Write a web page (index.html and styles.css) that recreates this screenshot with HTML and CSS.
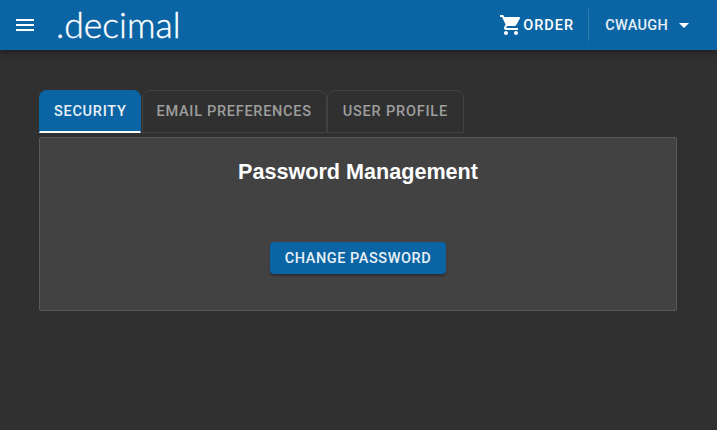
FILE: index.html
```html
<!DOCTYPE html>
<html lang="en">
<head>
  <meta charset="UTF-8">
  <title>Account settings</title>
  <link rel="stylesheet" href="styles.css">
</head>
<body>
  <header class="toolbar">
    <button class="menu-btn" aria-label="Menu">
      <svg width="24" height="24" viewBox="0 0 24 24"><path fill="#fff" d="M3 18h18v-2H3v2zm0-5h18v-2H3v2zm0-7v2h18V6H3z"/></svg>
    </button>
    <span class="logo">.decimal</span>
    <div class="spacer"></div>
    <a class="order">
      <svg width="24" height="24" viewBox="0 0 24 24"><path fill="#fff" d="M17.21 9l-4.38-6.56M7 18c-1.1 0-1.99.9-1.99 2S5.9 22 7 22s2-.9 2-2-.9-2-2-2zM1 2v2h2l3.6 7.59-1.35 2.45c-.16.28-.25.61-.25.96 0 1.1.9 2 2 2h12v-2H7.42c-.14 0-.25-.11-.25-.25l.03-.12.9-1.63h7.45c.75 0 1.41-.41 1.75-1.03l3.58-6.49c.08-.14.12-.31.12-.48 0-.55-.45-1-1-1H5.21l-.94-2H1zm16 16c-1.1 0-1.99.9-1.99 2s.89 2 1.99 2 2-.9 2-2-.9-2-2-2z"/></svg>
      <span>ORDER</span>
    </a>
    <div class="divider"></div>
    <a class="user">
      <span>CWAUGH</span>
      <i class="caret"></i>
    </a>
  </header>

  <main class="content">
    <ul class="tabs">
      <li class="tab active">SECURITY</li>
      <li class="tab">EMAIL PREFERENCES</li>
      <li class="tab">USER PROFILE</li>
    </ul>
    <section class="card">
      <h2>Password Management</h2>
      <button class="primary">CHANGE PASSWORD</button>
    </section>
  </main>
</body>
</html>
```

FILE: styles.css
```css
* {
  box-sizing: border-box;
  padding: 0;
  margin: 0;
}
html, body {
  height: 100%;
  overflow: hidden;
}
body {
  background: #303030;
  color: #fff;
  font-family: Roboto, "Liberation Sans", sans-serif;
}

.toolbar {
  display: flex;
  align-items: center;
  height: 50px;
  background: #0b65a4;
  box-shadow: 0 2px 4px -1px rgba(0,0,0,.2), 0 4px 5px 0 rgba(0,0,0,.14), 0 1px 10px 0 rgba(0,0,0,.12);
}
.menu-btn {
  display: flex;
  margin-left: 13px;
  background: none;
  border: none;
}
.logo {
  margin-left: 19px;
  font-family: Lato, sans-serif;
  font-size: 35.5px;
  font-weight: 300;
  line-height: 50px;
  color: #fff;
  -webkit-text-stroke: .4px #fff;
}
.spacer {
  flex: 1;
}
.order {
  display: flex;
  align-items: center;
  font-size: 14.5px;
  font-weight: 500;
  letter-spacing: 1px;
}
.divider {
  width: 1px;
  height: 32px;
  margin: 0 16px 0 14px;
  background: rgba(255,255,255,.15);
}
.user {
  display: flex;
  align-items: center;
  margin-right: 28px;
  font-size: 14.5px;
  font-weight: 500;
  letter-spacing: .3px;
  color: #e6eff6;
}
.caret {
  width: 0;
  height: 0;
  margin-left: 11px;
  border-left: 5px solid transparent;
  border-right: 5px solid transparent;
  border-top: 5px solid #fff;
}

.content {
  padding: 40px 40px 0 39px;
}
.tabs {
  display: flex;
  list-style: none;
}
.tab {
  height: 43px;
  padding: 0 14px;
  line-height: 41px;
  font-size: 14.5px;
  font-weight: 500;
  letter-spacing: .72px;
  color: #9e9e9e;
  border: 1px solid #424242;
  border-radius: 8px 8px 0 0;
}
.tab.active {
  margin-right: 1px;
  padding-right: 13px;
  color: #e8f0f6;
  background: #0b65a4;
  border-color: #0b65a4;
  border-bottom: 2px solid #fff;
}
.tab:last-child {
  padding: 0 15px;
  letter-spacing: .8px;
}
.card {
  display: flex;
  flex-direction: column;
  align-items: center;
  height: 174px;
  margin-top: 4px;
  background: #424242;
  border: 1px solid #585858;
  border-radius: 2px;
}
.card h2 {
  margin-top: 20px;
  font-size: 21.6px;
  line-height: 28px;
  font-weight: 700;
  font-family: "Liberation Sans", Arial, sans-serif;
}
.primary {
  width: 176px;
  height: 32px;
  margin-top: 56px;
  background: #0b65a4;
  color: #e8f0f6;
  border: none;
  border-radius: 4px;
  font-family: Roboto, sans-serif;
  font-size: 14.5px;
  font-weight: 500;
  letter-spacing: .55px;
  box-shadow: 0 2px 2px rgba(0,0,0,.3);
}
```
